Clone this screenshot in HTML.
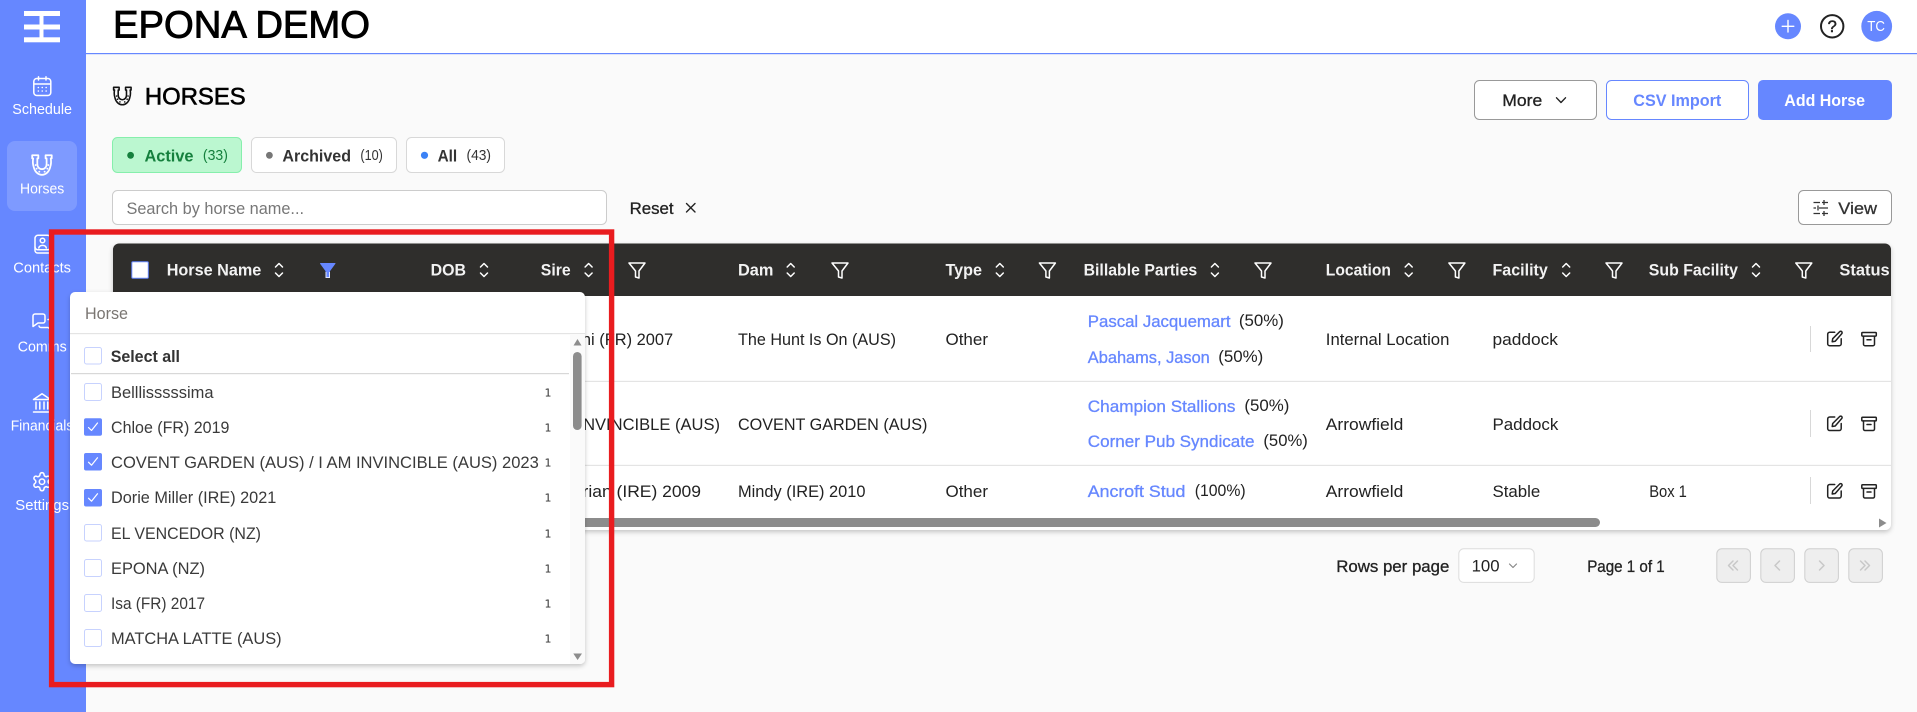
<!DOCTYPE html>
<html lang="en">
<head>
<meta charset="utf-8">
<title>Epona Demo - Horses</title>
<style>
html,body{margin:0;padding:0;width:1917px;height:712px;overflow:hidden;background:#fafafa}
svg{display:block}
text{font-family:"Liberation Sans",sans-serif;font-size:16.8px;fill:#222}
.nav{font-size:15px;fill:#fff}
.th{font-weight:700;fill:#f2f2f2;font-size:16.5px}
.m{stroke:currentColor;stroke-width:.3}
.lnk{fill:#6687ff;stroke:#6687ff;stroke-width:.3}
.li{fill:#3a3a3a}
.cnt{font-family:"DejaVu Sans",sans-serif;font-size:11px;fill:#333}
.ic{fill:none;stroke:#222;stroke-width:1.5;stroke-linecap:round;stroke-linejoin:round}
.wi{fill:none;stroke:#fff;stroke-width:1.5;stroke-linecap:round;stroke-linejoin:round}
.pg{fill:none;stroke:#c8c8c8;stroke-width:1.5;stroke-linecap:round;stroke-linejoin:round}
</style>
</head>
<body>
<svg width="1917" height="712" viewBox="0 0 1917 712" xmlns="http://www.w3.org/2000/svg">
<defs>
<filter id="sh" x="-5%" y="-5%" width="110%" height="110%"><feDropShadow dx="0" dy="2" stdDeviation="2.5" flood-color="#000" flood-opacity=".22"/></filter>
<symbol id="flt" overflow="visible"><path class="wi" d="M-8 -7H8L2 1V8L-1.5 7V1Z"/></symbol>
<symbol id="srt" overflow="visible"><path class="wi" d="M-3.5 -3L0 -6.5L3.5 -3M-3.5 3L0 6.5L3.5 3"/></symbol>
<symbol id="edit" overflow="visible"><path class="ic" d="M8 1.5H3a2 2 0 0 0-2 2V13a2 2 0 0 0 2 2h9.5a2 2 0 0 0 2-2V8"/><path class="ic" d="M5.5 11l.5-3L13 1a1.3 1.3 0 0 1 2 2L8.5 10.5Z"/></symbol>
<symbol id="arch" overflow="visible"><rect class="ic" x=".8" y=".8" width="14.5" height="3.6" rx=".8"/><path class="ic" d="M2.5 4.5V12.5a1.5 1.5 0 0 0 1.5 1.5h8a1.5 1.5 0 0 0 1.5-1.5V4.5M6 8h4"/></symbol>
<symbol id="shoe" overflow="visible"><path d="M2.5 2.5H8.5V5.5H7.5V11C7.5 14 9.5 16 12 16C14.5 16 16.5 14 16.5 11V5.5H15.5V2.5H21.5V5.5H20.5C21 8 21 11 20 14C18.8 18.8 15.5 21.5 12 21.5C8.5 21.5 5.2 18.8 4 14C3 11 3 8 3.5 5.5H2.5Z" fill="none" stroke="currentColor" stroke-width="1.7" stroke-linejoin="round"/><g fill="currentColor"><circle cx="5.8" cy="12" r=".9"/><circle cx="6.8" cy="15.5" r=".9"/><circle cx="9.4" cy="18.4" r=".9"/><circle cx="14.6" cy="18.4" r=".9"/><circle cx="17.2" cy="15.5" r=".9"/><circle cx="18.2" cy="12" r=".9"/></g></symbol>
</defs>

<!-- page -->
<rect width="1917" height="712" fill="#fafafa"/>
<rect x="86" width="1831" height="53" fill="#fff"/>
<rect x="86" y="53" width="1831" height="1.2" fill="#6687ff"/>

<!-- sidebar -->
<rect width="86" height="712" fill="#6687ff"/>
<g fill="#fff">
<rect x="24" y="11" width="36" height="5"/>
<rect x="24" y="24.5" width="36" height="5"/>
<rect x="24" y="37.3" width="36" height="5"/>
<rect x="39.5" y="16" width="4" height="22"/>
</g>
<g class="wi">
<rect x="33.8" y="78.5" width="17" height="17" rx="3"/>
<path d="M34 84H50.5M38.5 76.8V80M46 76.8V80"/>
<path d="M38.3 87.5h.1M42.2 87.5h.1M46.1 87.5h.1M38.3 91h.1M42.2 91h.1M46.1 91h.1"/>
</g>
<text class="nav" x="12.3" y="114" textLength="59.7" lengthAdjust="spacingAndGlyphs">Schedule</text>
<rect x="7" y="141" width="70" height="70" rx="8" fill="#fff" fill-opacity=".16"/>
<use href="#shoe" transform="translate(29.6 152.7) scale(1.03)" color="#fff"/>
<text class="nav" x="20" y="193.3" textLength="44.3" lengthAdjust="spacingAndGlyphs">Horses</text>
<g class="wi">
<rect x="35" y="235.3" width="15.5" height="14.5" rx="3"/>
<path d="M35 247v3.5a2.5 2.5 0 0 0 2.5 2.5H50.5"/>
<circle cx="42.5" cy="240.5" r="2.3"/>
<path d="M38.8 248c.5-3.5 7-3.5 7.5 0"/>
</g>
<text class="nav" x="13.3" y="272.7" textLength="57.7" lengthAdjust="spacingAndGlyphs">Contacts</text>
<g class="wi">
<path d="M35 314h8a2 2 0 0 1 2 2v5a2 2 0 0 1-2 2h-5l-5 3.5V316a2 2 0 0 1 2-2z"/>
<path d="M48 319.5h1a2 2 0 0 1 2 2v8l-3-2H41a2 2 0 0 1-2-1.5"/>
</g>
<text class="nav" x="17.7" y="351.7" textLength="49" lengthAdjust="spacingAndGlyphs">Comms</text>
<g class="wi">
<path d="M42 393.8L50.5 399.5H33.5Z"/>
<path d="M36 402V409M39.8 402V409M44 402V409M47.8 402V409M33.5 412H50.5"/>
</g>
<text class="nav" x="10.7" y="430.7" textLength="62.6" lengthAdjust="spacingAndGlyphs">Financials</text>
<g transform="translate(31.2 470.9) scale(.9)" fill="none" stroke="#fff" stroke-width="1.7" stroke-linecap="round" stroke-linejoin="round">
<path d="M12.22 2h-.44a2 2 0 0 0-2 2v.18a2 2 0 0 1-1 1.73l-.43.25a2 2 0 0 1-2 0l-.15-.08a2 2 0 0 0-2.73.73l-.22.38a2 2 0 0 0 .73 2.73l.15.1a2 2 0 0 1 1 1.72v.51a2 2 0 0 1-1 1.74l-.15.09a2 2 0 0 0-.73 2.73l.22.38a2 2 0 0 0 2.73.73l.15-.08a2 2 0 0 1 2 0l.43.25a2 2 0 0 1 1 1.73V20a2 2 0 0 0 2 2h.44a2 2 0 0 0 2-2v-.18a2 2 0 0 1 1-1.73l.43-.25a2 2 0 0 1 2 0l.15.08a2 2 0 0 0 2.73-.73l.22-.39a2 2 0 0 0-.73-2.73l-.15-.08a2 2 0 0 1-1-1.74v-.5a2 2 0 0 1 1-1.74l.15-.09a2 2 0 0 0 .73-2.73l-.22-.38a2 2 0 0 0-2.73-.73l-.15.08a2 2 0 0 1-2 0l-.43-.25a2 2 0 0 1-1-1.73V4a2 2 0 0 0-2-2z"/>
<circle cx="12" cy="12" r="3"/>
</g>
<text class="nav" x="15.3" y="510" textLength="53.7" lengthAdjust="spacingAndGlyphs">Settings</text>

<!-- header -->
<text x="113" y="37.3" style="font-size:38px;fill:#000;stroke:#000;stroke-width:.9" textLength="257" lengthAdjust="spacingAndGlyphs">EPONA DEMO</text>
<circle cx="1788" cy="26.3" r="13" fill="#6687ff"/>
<path d="M1788 20.5V32M1782.2 26.3H1793.8" stroke="#fff" stroke-width="1.4" stroke-linecap="round"/>
<circle cx="1832.2" cy="26.3" r="11.2" fill="none" stroke="#222" stroke-width="2"/>
<text x="1832.2" y="32.2" text-anchor="middle" style="font-size:16.5px;fill:#222;stroke:#222;stroke-width:.5">?</text>
<circle cx="1876.7" cy="26.3" r="15.4" fill="#6687ff"/>
<text x="1867.3" y="31" style="font-size:15px;fill:#fff" textLength="17.7" lengthAdjust="spacingAndGlyphs">TC</text>

<!-- page title + actions -->
<use href="#shoe" transform="translate(111.3 85) scale(.92)" color="#111"/>
<text x="144.9" y="104.7" style="font-size:24px;fill:#000;stroke:#000;stroke-width:.6" textLength="100.8" lengthAdjust="spacingAndGlyphs">HORSES</text>

<rect x="1474.5" y="80.5" width="122" height="39" rx="5" fill="#fff" stroke="#999"/>
<text class="m" color="#222" x="1502.3" y="106" textLength="40" lengthAdjust="spacingAndGlyphs">More</text>
<path d="M1556.5 97.8L1561 102.5L1565.5 97.8" fill="none" stroke="#222" stroke-width="1.4" stroke-linecap="round" stroke-linejoin="round"/>
<rect x="1606.5" y="80.5" width="142" height="39" rx="5" fill="#fff" stroke="#6687ff"/>
<text x="1633.3" y="106" style="fill:#6687ff;font-weight:700" textLength="88" lengthAdjust="spacingAndGlyphs">CSV Import</text>
<rect x="1758" y="80" width="134" height="40" rx="5" fill="#6687ff"/>
<text x="1784.3" y="106" style="fill:#fff;font-weight:700" textLength="80.7" lengthAdjust="spacingAndGlyphs">Add Horse</text>

<!-- chips -->
<rect x="112.5" y="137.5" width="129" height="35" rx="5" fill="#bbf7d0" stroke="#86efac"/>
<circle cx="130.6" cy="155.3" r="3.4" fill="#15803d"/>
<text x="144.5" y="161.3" style="fill:#15803d;font-weight:700" textLength="49" lengthAdjust="spacingAndGlyphs">Active</text>
<text x="202.9" y="160" style="fill:#15803d;font-size:15px" textLength="25" lengthAdjust="spacingAndGlyphs">(33)</text>

<rect x="251.5" y="137.5" width="145" height="35" rx="5" fill="#fff" stroke="#d8d8d8"/>
<circle cx="269.4" cy="155.3" r="3.4" fill="#777"/>
<text x="282.4" y="161.3" style="fill:#333;font-weight:700" textLength="68.6" lengthAdjust="spacingAndGlyphs">Archived</text>
<text x="360.4" y="160" style="fill:#333;font-size:15px" textLength="22.5" lengthAdjust="spacingAndGlyphs">(10)</text>

<rect x="406.5" y="137.5" width="98" height="35" rx="5" fill="#fff" stroke="#d8d8d8"/>
<circle cx="424.5" cy="155.3" r="3.6" fill="#3b82f6"/>
<text x="437.6" y="161.3" style="fill:#333;font-weight:700" textLength="19.6" lengthAdjust="spacingAndGlyphs">All</text>
<text x="466.5" y="160" style="fill:#333;font-size:15px" textLength="24.5" lengthAdjust="spacingAndGlyphs">(43)</text>

<!-- search row -->
<rect x="112.5" y="190.5" width="494" height="34" rx="5" fill="#fff" stroke="#ccc"/>
<text x="126.5" y="214" style="fill:#777" textLength="177.5" lengthAdjust="spacingAndGlyphs">Search by horse name...</text>
<text class="m" color="#222" x="629.6" y="214" textLength="44" lengthAdjust="spacingAndGlyphs">Reset</text>
<path d="M686.5 203.5L695 212M695 203.5L686.5 212" fill="none" stroke="#222" stroke-width="1.4" stroke-linecap="round"/>
<rect x="1798.5" y="190.5" width="93" height="34" rx="5" fill="#fff" stroke="#999"/>
<path d="M1813.5 202.5H1820M1822 202.5H1828M1824 200V205M1813.5 208H1816M1819 208H1828M1818 205.5V210.5M1813.5 213.5H1820M1822 213.5H1828M1824 211V216" fill="none" stroke="#333" stroke-width="1.3"/>
<text class="m" color="#333" x="1838.3" y="214" style="fill:#333" textLength="38.7" lengthAdjust="spacingAndGlyphs">View</text>

<!-- table -->
<rect x="113" y="243.5" width="1778" height="286.5" rx="6" fill="#fff" filter="url(#sh)"/>
<path d="M113 296V249.5a6 6 0 0 1 6-6H1885a6 6 0 0 1 6 6V296Z" fill="#2f2e2c"/>
<rect x="131.8" y="261.8" width="16.5" height="16.5" rx="1" fill="#fff" stroke="#6687ff"/>
<text class="th" x="166.7" y="275.7" textLength="94.6" lengthAdjust="spacingAndGlyphs">Horse Name</text>
<use href="#srt" x="279" y="270"/>
<path d="M320.5 263.5H335L329.5 271V277.5H326V271Z" fill="#6687ff" stroke="#6687ff" stroke-width="1" stroke-linejoin="round"/>
<path d="M326 272V277.5H329.5V272" fill="none" stroke="#dfe6ff" stroke-width="1"/>
<text class="th" x="430.6" y="275.7" textLength="35.4" lengthAdjust="spacingAndGlyphs">DOB</text>
<use href="#srt" x="484" y="270"/>
<text class="th" x="540.8" y="275.7" textLength="29.8" lengthAdjust="spacingAndGlyphs">Sire</text>
<use href="#srt" x="588.6" y="270"/>
<use href="#flt" x="637" y="270"/>
<text class="th" x="738" y="275.7" textLength="35.4" lengthAdjust="spacingAndGlyphs">Dam</text>
<use href="#srt" x="790.7" y="270"/>
<use href="#flt" x="840" y="270"/>
<text class="th" x="945.5" y="275.7" textLength="36.5" lengthAdjust="spacingAndGlyphs">Type</text>
<use href="#srt" x="999.8" y="270"/>
<use href="#flt" x="1047.4" y="270"/>
<text class="th" x="1083.6" y="275.7" textLength="113.6" lengthAdjust="spacingAndGlyphs">Billable Parties</text>
<use href="#srt" x="1214.9" y="270"/>
<use href="#flt" x="1263" y="270"/>
<text class="th" x="1325.8" y="275.7" textLength="65.2" lengthAdjust="spacingAndGlyphs">Location</text>
<use href="#srt" x="1408.7" y="270"/>
<use href="#flt" x="1456.9" y="270"/>
<text class="th" x="1492.5" y="275.7" textLength="55.3" lengthAdjust="spacingAndGlyphs">Facility</text>
<use href="#srt" x="1566.2" y="270"/>
<use href="#flt" x="1614" y="270"/>
<text class="th" x="1648.8" y="275.7" textLength="89.2" lengthAdjust="spacingAndGlyphs">Sub Facility</text>
<use href="#srt" x="1756" y="270"/>
<use href="#flt" x="1803.8" y="270"/>
<text class="th" x="1839.4" y="275.7" textLength="50.3" lengthAdjust="spacingAndGlyphs">Status</text>

<rect x="113" y="380.8" width="1778" height="1.2" fill="#e4e4e4"/>
<rect x="113" y="464.8" width="1778" height="1.2" fill="#e4e4e4"/>

<!-- row 1 -->
<text x="540.8" y="345" textLength="132.4" lengthAdjust="spacingAndGlyphs">Siyouni (FR) 2007</text>
<text x="738" y="345" textLength="158" lengthAdjust="spacingAndGlyphs">The Hunt Is On (AUS)</text>
<text x="945.5" y="345" textLength="42.5" lengthAdjust="spacingAndGlyphs">Other</text>
<text class="lnk" x="1087.8" y="327" textLength="142.7" lengthAdjust="spacingAndGlyphs">Pascal Jacquemart</text>
<text x="1238.9" y="326" textLength="45" lengthAdjust="spacingAndGlyphs">(50%)</text>
<text class="lnk" x="1087.8" y="363" textLength="122" lengthAdjust="spacingAndGlyphs">Abahams, Jason</text>
<text x="1218.3" y="362" textLength="45" lengthAdjust="spacingAndGlyphs">(50%)</text>
<text x="1325.8" y="345" textLength="123.6" lengthAdjust="spacingAndGlyphs">Internal Location</text>
<text x="1492.5" y="345" textLength="65.4" lengthAdjust="spacingAndGlyphs">paddock</text>
<rect x="1810" y="326" width="1" height="26" fill="#d8d8d8"/>
<use href="#edit" x="1826.7" y="330.7"/>
<use href="#arch" x="1861" y="331.7"/>

<!-- row 2 -->
<text x="540.8" y="430" textLength="179.2" lengthAdjust="spacingAndGlyphs">I AM INVINCIBLE (AUS)</text>
<text x="738" y="430" textLength="189.4" lengthAdjust="spacingAndGlyphs">COVENT GARDEN (AUS)</text>
<text class="lnk" x="1087.8" y="412" textLength="147.7" lengthAdjust="spacingAndGlyphs">Champion Stallions</text>
<text x="1244.4" y="411" textLength="45" lengthAdjust="spacingAndGlyphs">(50%)</text>
<text class="lnk" x="1087.8" y="447" textLength="166.7" lengthAdjust="spacingAndGlyphs">Corner Pub Syndicate</text>
<text x="1263.4" y="446" textLength="44.4" lengthAdjust="spacingAndGlyphs">(50%)</text>
<text x="1325.8" y="430" textLength="77.5" lengthAdjust="spacingAndGlyphs">Arrowfield</text>
<text x="1492.5" y="430" textLength="65.8" lengthAdjust="spacingAndGlyphs">Paddock</text>
<rect x="1810" y="410" width="1" height="27" fill="#d8d8d8"/>
<use href="#edit" x="1826.7" y="415.5"/>
<use href="#arch" x="1861" y="416.5"/>

<!-- row 3 -->
<text x="540.8" y="497" textLength="160.2" lengthAdjust="spacingAndGlyphs">Pretorian (IRE) 2009</text>
<text x="738" y="497" textLength="127.5" lengthAdjust="spacingAndGlyphs">Mindy (IRE) 2010</text>
<text x="945.5" y="497" textLength="42.5" lengthAdjust="spacingAndGlyphs">Other</text>
<text class="lnk" x="1087.8" y="497" textLength="97.6" lengthAdjust="spacingAndGlyphs">Ancroft Stud</text>
<text x="1194.7" y="496" textLength="51" lengthAdjust="spacingAndGlyphs">(100%)</text>
<text x="1325.8" y="497" textLength="77.5" lengthAdjust="spacingAndGlyphs">Arrowfield</text>
<text x="1492.5" y="497" textLength="47.8" lengthAdjust="spacingAndGlyphs">Stable</text>
<text x="1649.2" y="497" textLength="37.7" lengthAdjust="spacingAndGlyphs">Box 1</text>
<rect x="1810" y="477" width="1" height="27" fill="#d8d8d8"/>
<use href="#edit" x="1826.7" y="483"/>
<use href="#arch" x="1861" y="484"/>

<!-- table scrollbar -->
<rect x="130" y="518" width="1470" height="9" rx="4.5" fill="#8c8c8c"/>
<path d="M1879 518.5V527.5L1886.5 523Z" fill="#8c8c8c"/>

<!-- pagination -->
<text class="m" color="#222" x="1336.2" y="572" textLength="113.2" lengthAdjust="spacingAndGlyphs">Rows per page</text>
<rect x="1458.8" y="548.8" width="75.4" height="33.6" rx="5" fill="#fff" stroke="#ddd"/>
<text x="1471.6" y="571.5" textLength="28" lengthAdjust="spacingAndGlyphs">100</text>
<path d="M1509.5 564L1513 567.5L1516.5 564" fill="none" stroke="#888" stroke-width="1.2" stroke-linecap="round" stroke-linejoin="round"/>
<text class="m" color="#222" x="1587.2" y="572" textLength="77.5" lengthAdjust="spacingAndGlyphs">Page 1 of 1</text>
<g fill="#eee" stroke="#cfcfcf">
<rect x="1716.8" y="548.8" width="33.6" height="33.6" rx="5"/>
<rect x="1760.8" y="548.8" width="33.6" height="33.6" rx="5"/>
<rect x="1804.8" y="548.8" width="33.6" height="33.6" rx="5"/>
<rect x="1848.8" y="548.8" width="33.6" height="33.6" rx="5"/>
</g>
<path class="pg" d="M1733 561L1728.5 565.5L1733 570M1737.5 561L1733 565.5L1737.5 570"/>
<path class="pg" d="M1779.5 561L1775 565.5L1779.5 570"/>
<path class="pg" d="M1819.5 561L1824 565.5L1819.5 570"/>
<path class="pg" d="M1860.5 561L1865 565.5L1860.5 570M1865 561L1869.5 565.5L1865 570"/>

<!-- filter popup -->
<rect x="70" y="292" width="515" height="372" rx="5" fill="#fff" filter="url(#sh)"/>
<text x="85" y="319" style="fill:#7a7672" textLength="43" lengthAdjust="spacingAndGlyphs">Horse</text>
<rect x="70" y="333" width="515" height="1.2" fill="#e4e4e4"/>
<path d="M570 334H585V659a5 5 0 0 1-5 5H570Z" fill="#fafafa"/>
<path d="M573.5 345.5L577.5 339L581.5 345.5Z" fill="#8c8c8c"/>
<rect x="573" y="352" width="8.6" height="78" rx="4.3" fill="#8c8c8c"/>
<path d="M573.3 653.5H582L577.6 660Z" fill="#8c8c8c"/>

<rect x="84.5" y="347.5" width="17" height="16.5" rx="2" fill="#fff" stroke="#c7d2fe"/>
<text x="110.7" y="362" style="font-weight:700;fill:#333" textLength="69.3" lengthAdjust="spacingAndGlyphs">Select all</text>
<rect x="71" y="373" width="498" height="1.2" fill="#d8d8d8"/>

<g fill="#fff" stroke="#c7d2fe">
<rect x="84.5" y="383.5" width="17" height="17" rx="2"/>
<rect x="84.5" y="524.5" width="17" height="16.5" rx="2"/>
<rect x="84.5" y="559.5" width="17" height="17" rx="2"/>
<rect x="84.5" y="594.5" width="17" height="17" rx="2"/>
<rect x="84.5" y="629.5" width="17" height="17" rx="2"/>
</g>
<g fill="#6687ff">
<rect x="84" y="418.3" width="18" height="17.5" rx="2"/>
<rect x="84" y="453" width="18" height="17.5" rx="2"/>
<rect x="84" y="489" width="18" height="17.5" rx="2"/>
</g>
<g fill="none" stroke="#fff" stroke-width="1.2" stroke-linecap="round" stroke-linejoin="round">
<path d="M88.5 427.5L91.5 430.5L97.5 423"/>
<path d="M88.5 462.2L91.5 465.2L97.5 457.7"/>
<path d="M88.5 498.2L91.5 501.2L97.5 493.7"/>
</g>

<text class="li" x="111" y="398" textLength="102.5" lengthAdjust="spacingAndGlyphs">Belllisssssima</text>
<text class="li" x="111" y="433" textLength="118.4" lengthAdjust="spacingAndGlyphs">Chloe (FR) 2019</text>
<text class="li" x="111" y="468" textLength="427.8" lengthAdjust="spacingAndGlyphs">COVENT GARDEN (AUS) / I AM INVINCIBLE (AUS) 2023</text>
<text class="li" x="111" y="503" textLength="165.3" lengthAdjust="spacingAndGlyphs">Dorie Miller (IRE) 2021</text>
<text class="li" x="111" y="539" textLength="150" lengthAdjust="spacingAndGlyphs">EL VENCEDOR (NZ)</text>
<text class="li" x="111" y="574" textLength="94" lengthAdjust="spacingAndGlyphs">EPONA (NZ)</text>
<text class="li" x="111" y="609" textLength="94" lengthAdjust="spacingAndGlyphs">Isa (FR) 2017</text>
<text class="li" x="111" y="644" textLength="170.6" lengthAdjust="spacingAndGlyphs">MATCHA LATTE (AUS)</text>

<text class="cnt" x="544.5" y="396.5">1</text>
<text class="cnt" x="544.5" y="431.5">1</text>
<text class="cnt" x="544.5" y="466.5">1</text>
<text class="cnt" x="544.5" y="501.5">1</text>
<text class="cnt" x="544.5" y="537.3">1</text>
<text class="cnt" x="544.5" y="572.5">1</text>
<text class="cnt" x="544.5" y="607.5">1</text>
<text class="cnt" x="544.5" y="642.5">1</text>

<!-- red annotation frame -->
<rect x="51.6" y="232" width="560" height="452.6" fill="none" stroke="#e91c1f" stroke-width="5.4"/>
</svg>
</body>
</html>
